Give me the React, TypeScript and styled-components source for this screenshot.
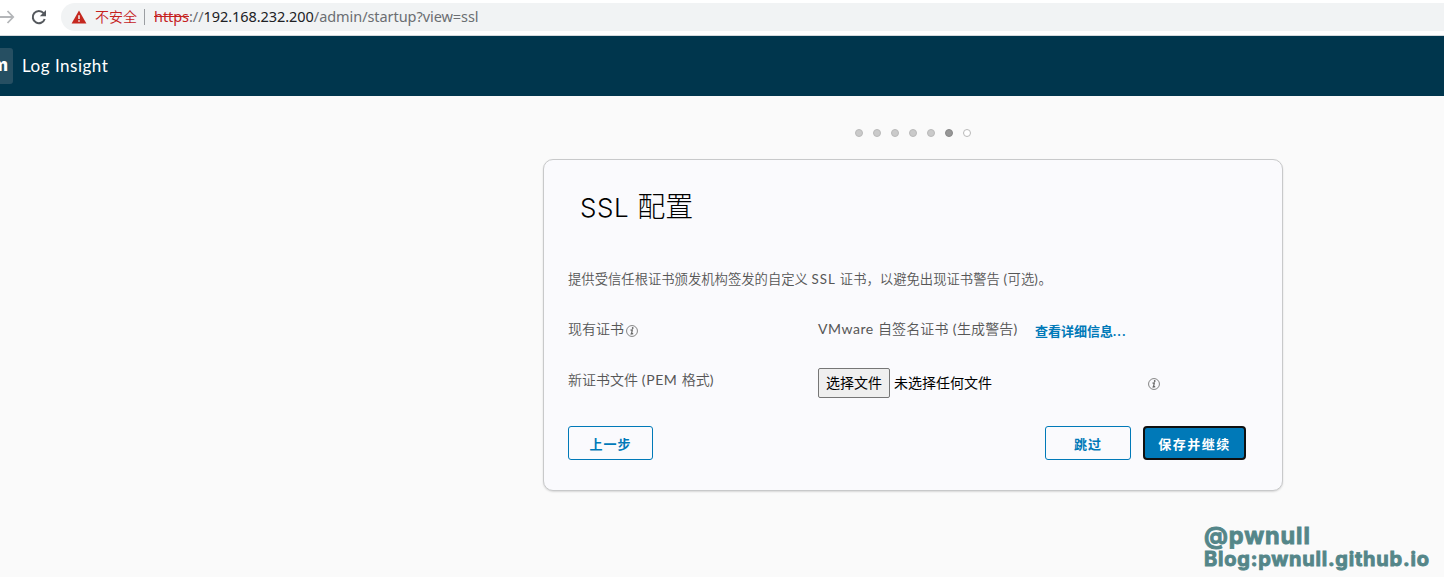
import React from "react";
import styled, { createGlobalStyle } from "styled-components";

const GlobalStyle = createGlobalStyle`
  * { box-sizing: border-box; }
  html, body { margin: 0; padding: 0; }
  body {
    background: #fafafa;
    font-family: Lato, "Noto Sans CJK SC", sans-serif;
    color: #565656;
    overflow: hidden;
  }
`;

const Page = styled.div`
  position: relative;
  width: 100%;
  height: 577px;
  overflow: hidden;
  background: #fafafa;
`;

const BrowserBar = styled.div`
  display: flex;
  align-items: center;
  height: 36px;
  padding-bottom: 2px;
  background: #fff;
  border-bottom: 1px solid #d5dadd;
`;

const NavIcon = styled.svg`
  flex: none;
  display: block;
`;

const AddressBar = styled.div`
  display: flex;
  align-items: center;
  flex: 1;
  height: 28px;
  margin-left: 12px;
  padding-left: 10px;
  background: #f1f3f4;
  border-radius: 14px 0 0 14px;
  white-space: nowrap;
`;

const Unsafe = styled.span`
  margin: -2px 0 0 8px;
  font: 350 14px/20px "Noto Sans CJK SC", sans-serif;
  color: #c5221f;
`;

const Divider = styled.span`
  width: 1px;
  height: 16px;
  margin: 0 9px 0 7px;
  background: #9b9ea2;
`;

const Url = styled.span`
  margin-top: -2px;
  font: 400 14.5px/20px "Noto Sans", sans-serif;
  letter-spacing: -0.06px;
  color: #6b6e72;
`;

const Scheme = styled.span`
  color: #c5221f;
  text-decoration: line-through;
`;

const Host = styled.span`
  color: #202124;
`;

const Header = styled.header`
  display: flex;
  align-items: center;
  height: 60px;
  background: #00364d;
  color: #fff;
`;

const Logo = styled.div`
  display: flex;
  align-items: center;
  justify-content: flex-end;
  width: 13px;
  height: 36px;
  padding: 0 5px 3px 0;
  overflow: hidden;
  background: #264f62;
  border-radius: 0 3px 3px 0;
  font: 800 17px/20px Inter, sans-serif;
`;

const Product = styled.span`
  margin: -1px 0 0 9px;
  font-size: 17px;
  line-height: 20px;
  letter-spacing: 0.5px;
`;

const Wizard = styled.main`
  width: 740px;
  margin-left: 543px;
`;

const Steps = styled.div`
  display: flex;
  justify-content: center;
  gap: 10px;
  padding-top: 33px;
`;

type StepState = "done" | "current" | "next";

const Step = styled.span<{ $state: StepState }>`
  width: 8px;
  height: 8px;
  border-radius: 50%;
  border: 1px solid ${(p) => (p.$state === "current" ? "#888" : "#b9b9b9")};
  background: ${(p) => ({ done: "#cacaca", current: "#979797", next: "#fff" })[p.$state]};
`;

const Card = styled.section`
  height: 332px;
  margin-top: 22px;
  padding: 0 36px 0 24px;
  border: 1px solid #c8c9ca;
  border-radius: 10px;
  background: #fafafd;
  box-shadow: 0 1px 2px rgba(0, 0, 0, 0.14);
`;

const Title = styled.h1`
  height: 68px;
  margin: 0;
  padding: 27px 0 0 12px;
  font: 300 28px/40px Inter, "Noto Sans CJK SC", sans-serif;
  color: #000;
`;

const TitleLatin = styled.span`
  font-size: 26px;
  letter-spacing: 0.6px;
`;

const Latin = styled.span<{ $spacing: number }>`
  font-weight: 400;
  letter-spacing: ${(p) => p.$spacing}px;
`;

const Intro = styled.p`
  margin: 41px 0 0;
  font: 350 13.33px/20px Lato, "Noto Sans CJK SC", sans-serif;
  white-space: nowrap;
`;

const Row = styled.div<{ $top: number; $height: number }>`
  display: grid;
  grid-template-columns: 250px 330px 1fr;
  height: ${(p) => p.$height}px;
  margin-top: ${(p) => p.$top}px;
  font: 350 14px/20px Lato, "Noto Sans CJK SC", sans-serif;
  white-space: nowrap;
`;

const Label = styled.div`
  display: flex;
  align-items: flex-start;
`;

const Value = styled.div`
  display: flex;
`;

const CertName = styled.span`
  width: 200px;
  letter-spacing: 0.16px;
`;

const DetailsLink = styled.a`
  margin: 2px 0 0 17px;
  font: 700 13px/20px Lato, "Noto Sans CJK SC", sans-serif;
  color: #0079b8;
`;

const Dots = styled.span`
  letter-spacing: 1.5px;
`;

const FilePicker = styled.div`
  display: flex;
  align-items: center;
  height: 30px;
  margin-top: -2px;
  gap: 4px;
  color: #000;
  font-weight: 400;
`;

const FileButton = styled.button`
  width: 72px;
  height: 30px;
  padding: 0 0 2px;
  border: 1px solid #767676;
  border-radius: 2px;
  background: #efefef;
  font: 400 14px/20px "Noto Sans CJK SC", sans-serif;
  color: #000;
`;

const InfoSvg = styled.svg<{ $left?: number; $top: number }>`
  flex: none;
  margin: ${(p) => p.$top}px 0 0 ${(p) => p.$left ?? 0}px;
`;

const Actions = styled.div`
  display: flex;
  gap: 12px;
  margin-top: 28px;
`;

const Button = styled.button<{ $width: number; $primary?: boolean }>`
  width: ${(p) => p.$width}px;
  height: 34px;
  padding: 1px 0 0;
  border: ${(p) => (p.$primary ? "2px solid #101010" : "1px solid #0079b8")};
  border-radius: ${(p) => (p.$primary ? 4 : 3)}px;
  background: ${(p) => (p.$primary ? "#0079b8" : "transparent")};
  color: ${(p) => (p.$primary ? "#fff" : "#0079b8")};
  font: 700 13px/20px "Noto Sans CJK SC", sans-serif;
  letter-spacing: ${(p) => (p.$primary ? 1.5 : 1)}px;
`;

const Spacer = styled.div`
  flex: 1;
`;

const Signature = styled.div`
  position: absolute;
  left: 1204px;
  top: 523px;
  font-family: Inter, sans-serif;
  font-weight: 700;
  color: #548689;
  -webkit-text-stroke: 0.9px #548689;
  white-space: nowrap;
`;

const Handle = styled.div`
  font-size: 23.5px;
  line-height: 26px;
  letter-spacing: 0.9px;
`;

const Blog = styled.div`
  font-size: 20px;
  line-height: 20px;
  letter-spacing: 0.78px;
`;

const Info = ({ left, top }: { left?: number; top: number }) => (
  <InfoSvg $left={left} $top={top} width="12" height="12" viewBox="0 0 12 12">
    <circle cx="6" cy="6" r="5.45" fill="none" stroke="#777" strokeWidth="0.9" />
    <circle cx="6.7" cy="3" r="0.9" fill="#666" />
    <path d="M4.5 5.2 6.3 4.9 5.5 8.8M4.5 9.1 7.2 8.6" fill="none" stroke="#666" strokeWidth="1.2" />
  </InfoSvg>
);

const STEPS: StepState[] = ["done", "done", "done", "done", "done", "current", "next"];

export default function App() {
  return (
    <Page>
      <GlobalStyle />
      <BrowserBar>
        <NavIcon width="49" height="34" viewBox="0 0 49 34">
          <path d="M0 17H13M7.5 11 13.2 17 7.5 23" fill="none" stroke="#b4b6b9" strokeWidth="1.8" />
          <path d="M43.6 13.2A6.1 6.1 0 1 0 44.7 19" fill="none" stroke="#55595e" strokeWidth="2" />
          <path d="M46 10V16.2H39.8Z" fill="#55595e" />
        </NavIcon>
        <AddressBar>
          <NavIcon width="16" height="14" viewBox="0 0 16 14">
            <path d="M8 .5 15.4 13.5H.6Z" fill="#c5281f" />
            <path d="M8 5.2V9M8 10.2V11.8" stroke="#f1f3f4" strokeWidth="1.5" />
          </NavIcon>
          <Unsafe>不安全</Unsafe>
          <Divider />
          <Url>
            <Scheme>https</Scheme>://<Host>192.168.232.200</Host>/admin/startup?view=ssl
          </Url>
        </AddressBar>
      </BrowserBar>
      <Header>
        <Logo>m</Logo>
        <Product>Log Insight</Product>
      </Header>
      <Wizard>
        <Steps>
          {STEPS.map((state, i) => (
            <Step key={i} $state={state} />
          ))}
        </Steps>
        <Card>
          <Title>
            <TitleLatin>SSL</TitleLatin> 配置
          </Title>
          <Intro>
            提供受信任根证书颁发机构签发的自定义 <Latin $spacing={1}>SSL </Latin>
            证书，以避免出现证书警告 <Latin $spacing={0.6}>(</Latin>可选<Latin $spacing={0.6}>)</Latin>。
          </Intro>
          <Row $top={30} $height={20}>
            <Label>
              现有证书
              <Info left={2} top={6} />
            </Label>
            <Value>
              <CertName>
                <Latin $spacing={0.55}>VMware </Latin>自签名证书 <Latin $spacing={0.5}>(</Latin>生成警告
                <Latin $spacing={0}>)</Latin>
              </CertName>
              <DetailsLink>
                查看详细信息<Dots>...</Dots>
              </DetailsLink>
            </Value>
          </Row>
          <Row $top={31} $height={28}>
            <Label>
              <span>
                新证书文件 <Latin $spacing={0.6}>(PEM </Latin>格式<Latin $spacing={0}>)</Latin>
              </span>
            </Label>
            <FilePicker>
              <FileButton>选择文件</FileButton>
              <span>未选择任何文件</span>
            </FilePicker>
            <Info top={8} />
          </Row>
          <Actions>
            <Button $width={85}>上一步</Button>
            <Spacer />
            <Button $width={86}>跳过</Button>
            <Button $width={103} $primary>
              保存并继续
            </Button>
          </Actions>
        </Card>
      </Wizard>
      <Signature>
        <Handle>@pwnull</Handle>
        <Blog>Blog:pwnull.github.io</Blog>
      </Signature>
    </Page>
  );
}
